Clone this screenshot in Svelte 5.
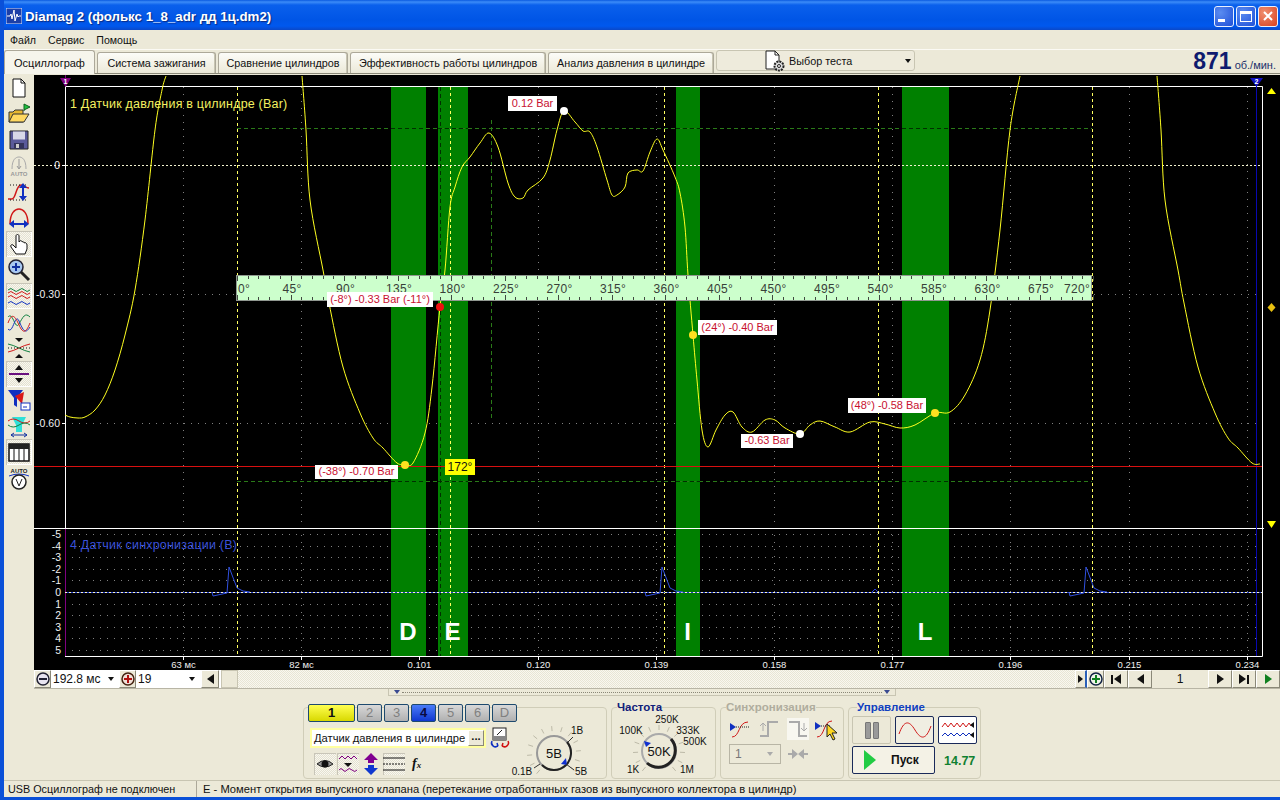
<script>
  // Trace of channel 1, in page pixels, read off the scope
  const leftEdge = [[65,415],[70,417],[78,418],[85,417],[95,410],[105,395],[115,370],[125,335],[135,290],[145,220],[155,130],[162,90],[166,76]];
  const dip = [[302,76],[306,130],[310,200],[323,270],[329,303],[343,367],[360,413],[373,438],[383,448],[397,463],[405,464],[413,463],[425,433],[432,387],[440,307],[445,270]];
  const body = [[450,207],[455,187],[462,167],[470,157],[480,143],[489,133],[498,147],[508,183],[515,197],[523,198],[528,190],[543,178],[550,160],[557,130],[564,111],[575,122],[583,131],[590,132],[597,147],[607,180],[612,195],[617,195],[625,187],[628,173],[637,170],[643,171],[650,152],[657,139],[663,150],[675,177],[680,193],[685,227],[688,275],[693,335],[697,380],[702,430],[708,447],[716,430],[725,415],[733,412],[742,427],[752,432],[765,420],[775,420],[785,428],[800,434],[810,425],[820,421],[835,427],[850,432],[870,422],[885,424],[900,428],[915,425],[935,413],[950,412],[965,395],[980,360],[990,310],[1000,230],[1010,130],[1020,76]];
  const rightDip = dip.filter((p) => p[0] + 855 < 1262).map((p) => [p[0] + 855, p[1]]);

  const toPoints = (list) => list.map((p) => p.join(",")).join(" ");

  // catmull-rom through the read-off points, the trace has no hard corners
  function smooth(list) {
    let d = `M${list[0][0]} ${list[0][1]}`;
    for (let i = 0; i < list.length - 1; i++) {
      const p0 = list[i - 1] || list[i];
      const p1 = list[i];
      const p2 = list[i + 1];
      const p3 = list[i + 2] || p2;
      const c1x = p1[0] + (p2[0] - p0[0]) / 6;
      const c1y = p1[1] + (p2[1] - p0[1]) / 6;
      const c2x = p2[0] - (p3[0] - p1[0]) / 6;
      const c2y = p2[1] - (p3[1] - p1[1]) / 6;
      d += `C${c1x.toFixed(1)} ${c1y.toFixed(1)} ${c2x.toFixed(1)} ${c2y.toFixed(1)} ${p2[0]} ${p2[1]}`;
    }
    return d;
  }
  const traces = [smooth(leftEdge), smooth([...dip, ...body]), smooth(rightDip)];

  const bands = [
    { x: 391, w: 35, letter: "D" },
    { x: 438, w: 30, letter: "E" },
    { x: 676, w: 24, letter: "I" },
    { x: 902, w: 47, letter: "L" }
  ];
  const cursors = [237.5, 450.5, 664.5, 878.5, 1092.5];
  const timeLabels = ["63 мс", "82 мс", "0.101", "0.120", "0.139", "0.158", "0.177", "0.196", "0.215", "0.234"];
  const timeX = timeLabels.map((_, i) => Math.round(183 + i * 118.2) + 0.5);

  const degrees = Array.from({ length: 17 }, (_, i) => i * 45);
  const step = 53.5;
  const minorTicks = Array.from({ length: 81 }, (_, i) => i);

  const yLabels = [
    { text: "0", y: 165 },
    { text: "-0.30", y: 294 },
    { text: "-0.60", y: 423 }
  ];
  const syncLabels = ["-5", "-4", "-3", "-2", "-1", "0", "1", "2", "3", "4", "5"];
  const syncY = syncLabels.map((_, i) => Math.round(534 + i * 11.6) + 0.5);

  const pulse = [[0,592],[1,596],[15,593],[17,567],[25,588],[31,591],[38,592]];
  const pulseAt = [212, 645, 1069];

  const notes = [
    { text: "0.12 Bar", x: 508, y: 96, w: 49, h: 15 },
    { text: "(24°) -0.40 Bar", x: 698, y: 320, w: 79, h: 15 },
    { text: "(48°) -0.58 Bar", x: 848, y: 398, w: 78, h: 15 },
    { text: "-0.63 Bar", x: 741, y: 434, w: 52, h: 14 },
    { text: "(-38°) -0.70 Bar", x: 315, y: 465, w: 83, h: 14 },
    { text: "(-8°) -0.33 Bar (-11°)", x: 327, y: 292, w: 106, h: 15 }
  ];
  const dots = [
    { x: 564, y: 111, c: "#ffffff" },
    { x: 693, y: 335, c: "#ffe020" },
    { x: 800, y: 434, c: "#ffffff" },
    { x: 935, y: 413, c: "#ffe020" },
    { x: 405, y: 465, c: "#ffe020" },
    { x: 440, y: 307, c: "#f01010" }
  ];

  const tabs = [
    { label: "Система зажигания", w: 119 },
    { label: "Сравнение цилиндров", w: 130 },
    { label: "Эффективность работы цилиндров", w: 196 },
    { label: "Анализ давления в цилиндре", w: 166 }
  ];
  const channels = [
    { label: "1", cls: "on-yellow" }, { label: "2", cls: "" }, { label: "3", cls: "" },
    { label: "4", cls: "on-blue" }, { label: "5", cls: "" }, { label: "6", cls: "" }, { label: "D", cls: "" }
  ];

  // radial tick marks for the two rotary switches
  function knobTicks(cx, cy, r1, r2, from, to, count) {
    return Array.from({ length: count }, (_, i) => {
      const a = ((from + ((to - from) * i) / (count - 1)) * Math.PI) / 180;
      return { x1: cx + r1 * Math.cos(a), y1: cy + r1 * Math.sin(a), x2: cx + r2 * Math.cos(a), y2: cy + r2 * Math.sin(a) };
    });
  }
  const voltTicks = knobTicks(555, 752, 22, 27, 130, 400, 13);
  const freqTicks = knobTicks(658, 751, 21, 26, 130, 410, 13);
</script>

<div class="window">
  <header class="titlebar">
    <svg class="app-icon" width="16" height="16" viewBox="0 0 16 16">
      <rect width="16" height="16" fill="#1c3fa8" stroke="#d8e4ff" />
      <path d="M1 8h3l1-2 1 5 2-9 1 11 2-7 1 3 1-1h2" fill="none" stroke="#fff" />
    </svg>
    <span class="title">Diamag 2 (фолькс 1_8_adr дд 1ц.dm2)</span>
    <span class="capbtn"><i class="min"></i></span>
    <span class="capbtn"><i class="max"></i></span>
    <span class="capbtn close">
      <svg width="12" height="12" viewBox="0 0 12 12"><path d="M2 2l8 8M10 2l-8 8" stroke="#fff" stroke-width="2" /></svg>
    </span>
  </header>

  <nav class="menu">
    <span>Файл</span>
    <span>Сервис</span>
    <span>Помощь</span>
  </nav>

  <div class="tabs">
    <span class="tab active">Осциллограф</span>
    {#each tabs as tab}
      <span class="tab" style="width: {tab.w}px">{tab.label}</span>
    {/each}
    <span class="test-select">
      <svg width="24" height="22" viewBox="0 0 24 22">
        <path d="M2 1h9l4 4v14H2z" fill="#fff" stroke="#222" />
        <path d="M11 1v4h4" fill="none" stroke="#222" />
        <circle cx="15" cy="16" r="4.500" fill="#ddd" stroke="#222" stroke-dasharray="2 1" stroke-width="2" />
        <circle cx="15" cy="16" r="1.500" fill="#fff" stroke="#222" />
      </svg>
      <span class="test-label">Выбор теста</span>
      <i class="caret"></i>
    </span>
    <span class="rpm"><b>871</b> об./мин.</span>
  </div>

  <div class="workspace">
    <aside class="toolbar">
      <span class="tool"><svg viewBox="0 0 24 24"><path d="M6 3h8l4 4v14H6z" fill="#fff" stroke="#111" /><path d="M14 3v4h4" fill="none" stroke="#111" /></svg></span>
      <span class="tool"><svg viewBox="0 0 24 24"><path d="M2 10h4l2-2h8v12H2z" fill="#e8b830" stroke="#333" /><path d="M2 20l4-8h16l-5 8z" fill="#ffd860" stroke="#333" /><path d="M17 9V2l6 3-6 3" fill="#20c040" stroke="#106020" /></svg></span>
      <span class="tool"><svg viewBox="0 0 24 24"><path d="M3 3h18v18H3z" fill="#5a5a9a" stroke="#222" /><rect x="6" y="3.500" width="12" height="8" fill="#d8d8e8" /><rect x="7" y="15" width="10" height="6" fill="#33335a" /><rect x="9" y="16" width="3" height="4" fill="#ccc" /></svg></span>
      <span class="tool"><svg viewBox="0 0 24 24"><path d="M5 15C5 5 9 3 12 3s7 2 7 12" fill="none" stroke="#aaa" /><path d="M12 5v9M10 12l2 3 2-3" fill="none" stroke="#999" /><text x="12" y="22" class="tool-text grey">AUTO</text></svg></span>
      <span class="tool"><svg viewBox="0 0 24 24"><path d="M1 19h4c4 0 4-14 9-14 4 0 4 3 8 3" fill="none" stroke="#d01818" stroke-width="1.500" /><path d="M3 5h18M3 20h18" stroke="#111" stroke-dasharray="1 2" /><path d="M16 5v14" stroke="#1030c0" stroke-width="2" /><path d="M12 8l4-5 4 5zM12 16l4 5 4-5z" fill="#1030c0" /></svg></span>
      <span class="tool"><svg viewBox="0 0 24 24"><path d="M3 18C3 7 8 3 12 3s9 4 9 15" fill="none" stroke="#d01818" stroke-width="1.500" /><path d="M5 18h14" stroke="#1030c0" stroke-width="2" /><path d="M7 14l-5 4 5 4zM17 14l5 4-5 4z" fill="#1030c0" /></svg></span>
      <span class="tool pressed"><svg viewBox="0 0 24 24"><path d="M9 22l-5-7c-1-2 1-3 2-2l3 3V4c0-2 3-2 3 0v6l1-1c1-1 2 0 2 1 1-1 2 0 2 1 1-1 3 0 3 2v4l-2 5z" fill="#fff" stroke="#111" /></svg></span>
      <span class="tool"><svg viewBox="0 0 24 24"><circle cx="9" cy="9" r="7" fill="#a8c8f0" stroke="#223" stroke-width="1.500" /><path d="M5 9h8M9 5v8" stroke="#1030a0" stroke-width="2" /><path d="M14 14l8 8" stroke="#222" stroke-width="3" /></svg></span>
      <span class="tool pressed"><svg viewBox="0 0 24 24"><path d="M1 6q3-3 5.500 0t5.500 0 5.500 0 5.500 0" fill="none" stroke="#108040" /><path d="M1 13q3-3 5.500 0t5.500 0 5.500 0 5.500 0M1 9q3-3 5.500 0t5.500 0 5.500 0 5.500 0" fill="none" stroke="#d01818" /><path d="M1 19q3-3 5.500 0t5.500 0 5.500 0 5.500 0" fill="none" stroke="#1030c0" /></svg></span>
      <span class="tool"><svg viewBox="0 0 24 24"><path d="M1 7c5-6 7 14 11 7s6-12 11-7" fill="none" stroke="#108040" /><path d="M1 19C6 25 8 2 12 11s6 14 11 6" fill="none" stroke="#1030c0" /><path d="M1 13C5 2 8 6 12 15s7 8 11-2" fill="none" stroke="#d01818" /></svg></span>
      <span class="tool"><svg viewBox="0 0 24 24"><path d="M8 2h8l-4 4zM8 22h8l-4-4z" fill="#111" /><path d="M1 16q5-1 11-4t11-4" fill="none" stroke="#d01818" /><path d="M1 8q5 1 11 4t11 4" fill="none" stroke="#108040" /><path d="M1 12h22" stroke="#111" stroke-dasharray="1 2" /></svg></span>
      <span class="tool pressed"><svg viewBox="0 0 24 24"><path d="M8 8h8l-4-5zM8 16h8l-4 5z" fill="#111" /><path d="M2 12h20" stroke="#6a1080" stroke-width="2" /></svg></span>
      <span class="tool"><svg viewBox="0 0 24 24"><path d="M1 2h15l-6 8v9l-3-2v-7z" fill="#1030c0" /><path d="M8 8l9-4-2 12z" fill="#d81818" /><rect x="14" y="15" width="9" height="7" fill="#fff" stroke="#1030c0" /><path d="M16 19h4" stroke="#1030c0" /></svg></span>
      <span class="tool"><svg viewBox="0 0 24 24"><path d="M5 3h14l-4 8v7h-6v-7z" fill="#30e0d8" /><path d="M1 7q5-4 11 0t11 0" fill="none" stroke="#d01818" /><path d="M1 11q5 4 11 0t11 0" fill="none" stroke="#108040" /><path d="M4 21h16M4 21l3-2M4 21l3 2M20 21l-3-2M20 21l-3 2" stroke="#1030a0" fill="none" /></svg></span>
      <span class="tool pressed"><svg viewBox="0 0 24 24"><rect x="2" y="4" width="20" height="17" fill="#fff" stroke="#111" stroke-width="1.500" /><rect x="2" y="4" width="20" height="5" fill="#222" /><path d="M7 9v12M12 9v12M17 9v12" stroke="#111" /></svg></span>
      <span class="tool"><svg viewBox="0 0 24 24"><text x="12" y="7" class="tool-text">AUTO</text><path d="M2 10q10-4 20 0" fill="none" stroke="#1030c0" /><circle cx="12" cy="16" r="7" fill="#fff" stroke="#222" stroke-width="1.500" /><path d="M9 13l3 7 3-7" fill="none" stroke="#222" /></svg></span>
    </aside>

    <svg class="scope" viewBox="34 75 1246 595" width="1246" height="595">
      <!-- grid -->
      {#each timeX as x}
        <line x1={x} y1="87" x2={x} y2="656" class="grid-dot" />
      {/each}
      <line x1="65" y1="294.500" x2="1262" y2="294.500" class="grid-dot" />
      <line x1="65" y1="423.500" x2="1262" y2="423.500" class="grid-dot" />
      {#each syncY as y}
        <line x1="65" y1={y} x2="1262" y2={y} class="grid-dot" />
      {/each}

      {#each bands as band}
        <rect x={band.x} y="87" width={band.w} height="569" fill="#008000" />
      {/each}

      <line x1="237" y1="128.500" x2="1092" y2="128.500" class="grid-green" />
      <line x1="237" y1="481.500" x2="1092" y2="481.500" class="grid-green" />
      <line x1="491.500" y1="120" x2="491.500" y2="420" class="grid-green" />
      {#each bands as band}
        <line x1={band.x} y1="128.500" x2={band.x + band.w} y2="128.500" class="grid-dark" />
        <line x1={band.x} y1="481.500" x2={band.x + band.w} y2="481.500" class="grid-dark" />
      {/each}
      <line x1="440.500" y1="87" x2="440.500" y2="656" class="grid-dark" />

      {#each cursors as x}
        <line x1={x} y1="87" x2={x} y2="656" class="cursor-line" />
      {/each}

      <!-- frame -->
      <line x1="65.500" y1="75" x2="65.500" y2="87" stroke="#800080" />
      <line x1="65.500" y1="87" x2="65.500" y2="528" stroke="#fff" />
      <line x1="65.500" y1="528" x2="65.500" y2="656" stroke="#800080" />
      <path d="M65 86.500H1262.500V656.500H65" fill="none" stroke="#fff" />
      <line x1="34" y1="528.500" x2="1264" y2="528.500" stroke="#fff" />
      <line x1="1256.500" y1="78" x2="1256.500" y2="656" stroke="#0808b0" />
      <line x1="34" y1="165.500" x2="1262" y2="165.500" class="zero-line" />
      <line x1="65" y1="592.500" x2="1262" y2="592.500" stroke="#2840d0" />
      <line x1="65" y1="592.500" x2="1262" y2="592.500" class="zero-line" />

      <!-- traces -->
      {#each traces as d}
        <path {d} class="trace" />
      {/each}
      {#each pulseAt as x0}
        <polyline points={toPoints(pulse.map((p) => [p[0] + x0, p[1]]))} class="trace-blue" />
      {/each}
      <path d="M872 592l3-3 3 3" fill="none" stroke="#2840d0" />

      <!-- angle ruler -->
      <rect x="236.500" y="275.500" width="855" height="25" class="ruler" />
      {#each minorTicks as i}
        <line x1={Math.round(237 + (i * step) / 5) + 0.5} y1="276" x2={Math.round(237 + (i * step) / 5) + 0.5} y2={i % 5 === 0 ? 281 : 279} class="tick" />
        <line x1={Math.round(237 + (i * step) / 5) + 0.5} y1="300" x2={Math.round(237 + (i * step) / 5) + 0.5} y2={i % 5 === 0 ? 295 : 297} class="tick" />
      {/each}
      {#each degrees as deg, i}
        <text x={i === 0 ? 244 : i === 16 ? 1077 : 238.5 + i * step} y="292.500" class="ruler-text">{deg}°</text>
      {/each}

      <line x1="34" y1="466.500" x2="1262" y2="466.500" stroke="#d81010" />

      <!-- axis labels -->
      {#each yLabels as label}
        <text x="60" y={label.y + 4} class="axis axis-end">{label.text}</text>
        <line x1="62" y1={label.y + 0.5} x2="65" y2={label.y + 0.5} stroke="#fff" />
      {/each}
      {#each syncLabels as label, i}
        <text x="61" y={syncY[i] + 3.500} class="axis axis-end">{label}</text>
      {/each}
      {#each timeLabels as label, i}
        <line x1={timeX[i]} y1="656" x2={timeX[i]} y2="660" stroke="#fff" />
        <text x={timeX[i]} y="668" class="axis axis-small">{label}</text>
      {/each}

      <text x="70" y="108" class="channel-name yellow">1 Датчик давления в цилиндре (Bar)</text>
      <text x="70" y="549" class="channel-name blue">4 Датчик синхронизации (B)</text>

      {#each bands as band}
        <text x={band.x + band.w / 2 - 0.5} y="640" class="band-letter">{band.letter}</text>
      {/each}

      <!-- measurement labels -->
      {#each notes as note}
        <rect x={note.x} y={note.y} width={note.w} height={note.h} fill="#fff" />
        <text x={note.x + note.w / 2} y={note.y + note.h - 4} class="note">{note.text}</text>
      {/each}
      {#each dots as dot}
        <circle cx={dot.x} cy={dot.y} r="4" fill={dot.c} />
      {/each}
      <rect x="445" y="459" width="30" height="16" fill="#ffff00" />
      <text x="460" y="471" class="note black">172°</text>

      <!-- channel markers -->
      <path d="M60 78h11l-5.500 9z" fill="#800080" />
      <text x="65.500" y="83.500" class="marker-num">1</text>
      <path d="M1250 78h13l-6.500 9z" fill="#1010c0" />
      <text x="1256.500" y="83.500" class="marker-num">2</text>
      <path d="M1267 94l4.500-6 4.500 6z" fill="#ffff00" />
      <path d="M1271.500 303l4 4.500-4 4.500-4-4.500z" fill="#e8c010" />
      <path d="M1267 521h9l-4.500 7z" fill="#ffff00" />
    </svg>
  </div>

  <div class="scrollrow">
    <span class="bevel square"><svg width="14" height="14" viewBox="0 0 14 14"><circle cx="7" cy="7" r="6" fill="#e8e4f0" stroke="#223" stroke-width="1.500" /><path d="M3 7h8" stroke="#223" stroke-width="2" /></svg></span>
    <span class="combo time">192.8 мс<i class="caret"></i></span>
    <span class="bevel square"><svg width="14" height="14" viewBox="0 0 14 14"><circle cx="7" cy="7" r="6" fill="#f0e0d8" stroke="#421" stroke-width="1.500" /><path d="M3 7h8M7 3v8" stroke="#b01010" stroke-width="2" /></svg></span>
    <span class="combo count">19<i class="caret"></i></span>
    <span class="bevel arrow"><i class="tri left"></i></span>
    <span class="thumb"></span>
    <span class="track"></span>
    <span class="bevel narrow"><i class="tri right small"></i></span>
    <span class="bevel square"><svg width="14" height="14" viewBox="0 0 14 14"><circle cx="7" cy="7" r="6" fill="#f0f4e8" stroke="#124" stroke-width="1.500" /><path d="M3 7h8M7 3v8" stroke="#108020" stroke-width="2" /></svg></span>
    <span class="bevel nav"><i class="bar"></i><i class="tri left"></i></span>
    <span class="bevel nav"><i class="tri left"></i></span>
    <span class="page">1</span>
    <span class="bevel nav"><i class="tri right"></i></span>
    <span class="bevel nav"><i class="tri right"></i><i class="bar"></i></span>
    <span class="bevel nav"><i class="tri right green"></i></span>
  </div>

  <div class="splitter"><i class="tri-down"></i><span class="dots"></span><i class="tri-down"></i></div>

  <div class="groups">
    <section class="group channels-group">
      <div class="channel-col">
        <div class="channel-row">
          {#each channels as ch, i}
            <span class="channel {ch.cls}" class:wide={i === 0}>{ch.label}</span>
          {/each}
        </div>
        <div class="sensor-row">
          <span class="sensor">Датчик давления в цилиндре<span class="more">...</span></span>
          <svg width="22" height="22" viewBox="0 0 22 22">
            <rect x="4" y="1" width="13" height="12" fill="#fff" stroke="#222" />
            <rect x="4" y="9" width="13" height="4" fill="#888" />
            <path d="M8 8l5-5" stroke="#222" />
            <path d="M3 14a4 4 0 0 0 6 5M9 19l-3 1M9 19l-1-3" fill="none" stroke="#1030c0" stroke-width="1.500" />
            <path d="M19 14a4 4 0 0 1-6 5M13 19l3 1M13 19l1-3" fill="none" stroke="#d01010" stroke-width="1.500" />
          </svg>
        </div>
        <div class="icon-row">
          <span class="mini pressed-mini"><svg width="18" height="18" viewBox="0 0 18 18"><path d="M1 9q8-7 16 0-8 6-16 0z" fill="#999" stroke="#222" /><circle cx="9" cy="9" r="3.500" fill="#111" /></svg></span>
          <span class="mini pressed-mini"><svg width="20" height="20" viewBox="0 0 20 20"><path d="M1 5l3-3 3 3 3-3 3 3 3-3 3 3" fill="none" stroke="#800080" /><path d="M1 16q2-3 4 0t4 0 5 0 5 0" fill="none" stroke="#800080" /><path d="M6 9h8l-4 4z" fill="#111" /></svg></span>
          <span class="mini"><svg width="20" height="22" viewBox="0 0 20 22"><path d="M10 0l7 7h-4v3H7V7H3z" fill="#800090" /><path d="M10 22l7-7h-4v-3H7v3H3z" fill="#1038d0" /></svg></span>
          <span class="mini pressed-mini"><svg width="22" height="16" viewBox="0 0 22 16"><path d="M0 2h22M0 14h22" stroke="#111" /><path d="M0 8h22" stroke="#111" stroke-dasharray="2 1" /></svg></span>
          <span class="fx">f<small>x</small></span>
        </div>
      </div>
      <svg class="knob volt" viewBox="518 712 87 66" width="87" height="66">
        {#each voltTicks as t}
          <line x1={t.x1} y1={t.y1} x2={t.x2} y2={t.y2} class="knob-tick" />
        {/each}
        <circle cx="555" cy="752" r="17" fill="#ece9d8" stroke="#999" stroke-width="2" />
        <path d="M568 741A17 17 0 0 1 543 764" fill="none" stroke="#222" stroke-width="2" />
        <path d="M562 763l5-6 1 7z" fill="#1030d0" />
        <line x1="569" y1="741" x2="574" y2="736" stroke="#333" />
        <line x1="541" y1="763" x2="535" y2="767" stroke="#333" />
        <line x1="567" y1="763" x2="575" y2="769" stroke="#333" />
        <text x="555" y="757" class="knob-center">5В</text>
        <text x="578" y="733" class="knob-label">1В</text>
        <text x="523" y="774" class="knob-label">0.1В</text>
        <text x="582" y="774" class="knob-label">5В</text>
      </svg>
    </section>

    <section class="group freq-group">
      <h3 class="legend navy">Частота</h3>
      <svg class="knob" viewBox="611 712 103 66" width="103" height="66">
        {#each freqTicks as t}
          <line x1={t.x1} y1={t.y1} x2={t.x2} y2={t.y2} class="knob-tick" />
        {/each}
        <circle cx="658" cy="751" r="17" fill="#ece9d8" stroke="#aaa" stroke-width="2" />
        <path d="M670 739A17 17 0 0 1 646 763" fill="none" stroke="#222" stroke-width="3" />
        <path d="M643 741l7 2-5 4z" fill="#1030d0" />
        <text x="658" y="756" class="knob-center">50K</text>
        <text x="666" y="723" class="knob-label">250K</text>
        <text x="630" y="734" class="knob-label">100K</text>
        <text x="687" y="734" class="knob-label">333K</text>
        <text x="694" y="745" class="knob-label">500K</text>
        <text x="632" y="773" class="knob-label">1K</text>
        <text x="686" y="773" class="knob-label">1M</text>
      </svg>
    </section>

    <section class="group sync-group">
      <h3 class="legend grey">Синхронизация</h3>
      <div class="sync-icons">
        <svg width="22" height="22" viewBox="0 0 22 22"><path d="M3 19c8 0 6-15 16-15" fill="none" stroke="#d01818" /><path d="M1 5l6 4-6 4z" fill="#1030c0" /><path d="M7 9h14" stroke="#222" stroke-dasharray="1 1" /></svg>
        <svg width="22" height="22" viewBox="0 0 22 22"><path d="M2 18h8V4h10" fill="none" stroke="#aaa" stroke-width="2" /><path d="M5 13V5M2 8l3-3 3 3" fill="none" stroke="#aaa" /></svg>
        <span class="sync-on"><svg width="22" height="22" viewBox="0 0 22 22"><path d="M2 4h10v14h8" fill="none" stroke="#aaa" stroke-width="2" /><path d="M17 5v8M14 10l3 3 3-3" fill="none" stroke="#aaa" /></svg></span>
        <svg class="cursor-icon" width="28" height="26" viewBox="0 0 28 26"><path d="M3 21c8 0 6-16 15-16" fill="none" stroke="#d01818" /><path d="M1 6l6 4-6 4z" fill="#1030c0" /><path d="M7 10h10" stroke="#222" stroke-dasharray="1 1" /><path d="M13 8l0 13 3-3 3 6 2-1-3-6h5z" fill="#ffd820" stroke="#222" /></svg>
      </div>
      <div class="sync-row">
        <span class="sync-combo">1<i class="caret pale"></i></span>
        <svg width="22" height="12" viewBox="0 0 22 12"><path d="M1 6h7M14 6h7" stroke="#aaa" stroke-width="2" /><path d="M5 1l6 5-6 5zM17 1l-6 5 6 5z" fill="#aaa" /></svg>
      </div>
    </section>

    <section class="group control-group">
      <h3 class="legend blue-title">Управление</h3>
      <div class="control-row">
        <span class="ctrl pause"><i></i><i></i></span>
        <span class="ctrl framed"><svg width="34" height="24" viewBox="0 0 34 24"><path d="M1 16C6 2 11 2 17 12s11 10 16 -4" fill="none" stroke="#d01818" /></svg></span>
        <span class="ctrl framed light"><svg width="34" height="24" viewBox="0 0 34 24"><path d="M1 9l3-4 3 4 3-4 3 4 3-4 3 4 3-4 3 4 3-4 2 3" fill="none" stroke="#d01818" /><path d="M1 18l3-3 3 3 3-3 3 3 3-3 3 3 3-3 3 3 3-3 2 2" fill="none" stroke="#1030c0" /><path d="M33 4l-4 3 4 3zM33 14l-4 3 4 3z" fill="#111" /></svg></span>
      </div>
      <div class="control-row">
        <span class="start">
          <svg width="14" height="20" viewBox="0 0 14 20"><path d="M1 0l12 10L1 20z" fill="#22cc44" /></svg>
          <b>Пуск</b>
        </span>
        <span class="timer">14.77</span>
      </div>
    </section>
  </div>

  <footer class="status">
    <span class="status-usb">USB Осциллограф не подключен</span>
    <span class="status-msg">E - Момент открытия выпускного клапана (перетекание отработанных газов из выпускного коллектора в цилиндр)</span>
  </footer>
</div>

<style>
  :global(body) {
    margin: 0;
    overflow: hidden;
    background: #ece9d8;
  }

  .window {
    width: 1280px;
    height: 800px;
    box-sizing: border-box;
    display: flex;
    flex-direction: column;
    background: #ece9d8;
    border-left: 4px solid #0a50d8;
    border-bottom: 3px solid #0a50d8;
    font: 11px "Liberation Sans", Arial, sans-serif;
    color: #111;
    overflow: hidden;
  }

  .titlebar {
    height: 30px;
    flex: none;
    display: flex;
    align-items: center;
    margin-left: -4px;
    padding: 2px 2px 0 6px;
    box-sizing: border-box;
    background: linear-gradient(#0a5ae0 0, #3c8cf8 2px, #0a60ec 5px, #0055e6 20px, #0058ee 26px, #0a48c8 30px);
  }

  .app-icon {
    margin-right: 3px;
  }

  .title {
    flex: 1;
    color: #fff;
    font-size: 13.300px;
    font-weight: bold;
    text-shadow: 1px 1px 1px #0a2a80;
  }

  .capbtn {
    width: 20px;
    height: 21px;
    margin-left: 2px;
    display: flex;
    align-items: center;
    justify-content: center;
    box-sizing: border-box;
    border: 1px solid #e8f0ff;
    border-radius: 3px;
    background: radial-gradient(circle at 30% 30%, #5a8cf0, #2050d8);
  }

  .capbtn.close {
    background: radial-gradient(circle at 30% 30%, #f09070, #d84020);
  }

  .capbtn .min {
    width: 7px;
    height: 3px;
    background: #fff;
    margin: 9px 6px 0 0;
  }

  .capbtn .max {
    width: 12px;
    height: 11px;
    box-sizing: border-box;
    border: 1px solid #fff;
    border-top-width: 3px;
  }

  .menu {
    height: 20px;
    flex: none;
    display: flex;
    align-items: center;
    padding-left: 6px;
    gap: 12px;
    border-bottom: 1px solid #fbfaf4;
    box-sizing: border-box;
    font-size: 10.600px;
  }

  .tabs {
    height: 24px;
    flex: none;
    display: flex;
    align-items: flex-end;
    gap: 2px;
    box-sizing: border-box;
    border-bottom: 1px solid #8a8878;
    font-size: 10.800px;
  }

  .tab {
    height: 21px;
    box-sizing: border-box;
    display: flex;
    align-items: center;
    justify-content: center;
    border: 1px solid #aca899;
    border-bottom: none;
    border-radius: 3px 3px 0 0;
    background: linear-gradient(#fcfcf8, #ece9d8);
    box-shadow: inset -1px 0 #c8c5b2;
    white-space: nowrap;
  }

  .tab.active {
    width: 91px;
    height: 24px;
    font-size: 11px;
    background: #f6f5ec;
    margin-bottom: -1px;
    box-shadow: none;
  }

  .test-select {
    width: 199px;
    height: 21px;
    margin-bottom: 2px;
    display: flex;
    align-items: center;
    box-sizing: border-box;
    padding-left: 47px;
    border: 1px solid #c8c5b2;
    border-radius: 3px;
    background: #eeebdc;
  }

  .test-label {
    margin-left: 1px;
    flex: 1;
  }

  .test-select .caret {
    margin-right: 3px;
  }

  .caret {
    width: 0;
    height: 0;
    border: 3px solid transparent;
    border-top: 4px solid #111;
    border-bottom: none;
    display: inline-block;
  }

  .caret.pale {
    border-top-color: #aaa;
  }

  .rpm {
    margin-left: auto;
    padding-right: 4px;
    color: #22306a;
    display: flex;
    align-items: baseline;
    gap: 3px;
    font-size: 11px;
  }

  .rpm b {
    font-size: 23px;
    line-height: 24px;
    color: #0e1a6e;
  }

  .workspace {
    flex: none;
    display: flex;
    height: 596px;
  }

  .toolbar {
    width: 30px;
    flex: none;
    display: flex;
    flex-direction: column;
    padding-top: 1px;
    box-sizing: border-box;
  }

  .tool {
    height: 26px;
    flex: none;
    display: flex;
    align-items: center;
    justify-content: center;
  }

  .tool svg {
    width: 24px;
    height: 24px;
  }

  .tool.pressed {
    background: repeating-conic-gradient(#f8f7f0 0 25%, #e4e1d0 0 50%) 0 0 / 2px 2px;
    box-shadow: inset 1px 1px #c8c5b8, inset -1px -1px #fff;
    margin: 0 2px;
  }

  .tool-text {
    font: bold 6px "Liberation Sans", Arial, sans-serif;
    text-anchor: middle;
    fill: #222;
  }

  .tool-text.grey {
    fill: #999;
  }

  .scope {
    display: block;
    background: #000;
    flex: none;
    margin-top: 1px;
  }

  .grid-dot {
    stroke: #808080;
    stroke-dasharray: 1 6;
  }

  .grid-green {
    stroke: #2a7a18;
    stroke-dasharray: 4 3;
  }

  .grid-dark {
    stroke: #003000;
    stroke-dasharray: 4 3;
  }

  .cursor-line {
    stroke: #ffff60;
    stroke-dasharray: 3 3;
  }

  .zero-line {
    stroke: #f4f4d0;
    stroke-dasharray: 2 2;
  }

  .trace {
    fill: none;
    stroke: #ffff20;
  }

  .trace-blue {
    fill: none;
    stroke: #3050e0;
  }

  .ruler {
    fill: #ccffcc;
    stroke: #909890;
  }

  .tick {
    stroke: #404840;
  }

  .ruler-text {
    font-size: 12px;
    letter-spacing: 0.3px;
    fill: #384038;
    text-anchor: middle;
  }

  .axis {
    fill: #f0f0f0;
    font-size: 10.500px;
  }

  .axis-end {
    text-anchor: end;
  }

  .axis-small {
    text-anchor: middle;
    font-size: 9.500px;
  }

  .channel-name {
    font-size: 12.500px;
    letter-spacing: 0.2px;
  }

  .channel-name.yellow {
    fill: #f4f060;
  }

  .channel-name.blue {
    fill: #3a50d8;
  }

  .band-letter {
    fill: #fff;
    font-size: 24px;
    font-weight: bold;
    text-anchor: middle;
  }

  .note {
    fill: #c81030;
    font-size: 11px;
    text-anchor: middle;
  }

  .note.black {
    fill: #111;
    font-size: 12px;
  }

  .marker-num {
    fill: #fff;
    font-size: 7px;
    font-weight: bold;
    text-anchor: middle;
  }

  .scrollrow {
    height: 19px;
    flex: none;
    margin-left: 30px;
    display: flex;
    align-items: stretch;
    box-sizing: border-box;
    background: #fff;
    border-bottom: 1px solid #b8b5a5;
    font-size: 12px;
  }

  .bevel {
    display: flex;
    align-items: center;
    justify-content: center;
    box-sizing: border-box;
    background: #ece9d8;
    border: 1px solid;
    border-color: #fff #8a8878 #8a8878 #fff;
    flex: none;
  }

  .square {
    width: 17px;
  }

  .arrow {
    width: 18px;
    margin-left: 1px;
  }

  .narrow {
    width: 12px;
    border-right: 2px solid #2a60b8;
  }

  .nav {
    width: 24px;
    gap: 1px;
  }

  .combo {
    background: #fff;
    display: flex;
    align-items: center;
    justify-content: space-between;
    padding: 0 5px 0 2px;
    box-sizing: border-box;
    flex: none;
  }

  .combo.time {
    width: 68px;
  }

  .combo.count {
    width: 64px;
  }

  .thumb {
    width: 17px;
    margin-left: 2px;
    background: #ece9d8;
    border: 1px solid #c8c5b2;
    box-sizing: border-box;
    flex: none;
  }

  .track {
    flex: 1;
    background: repeating-conic-gradient(#f8f7f0 0 25%, #e8e5d4 0 50%) 0 0 / 2px 2px;
  }

  .page {
    width: 56px;
    flex: none;
    background: #ece9d8;
    text-align: center;
    line-height: 18px;
  }

  .tri {
    width: 0;
    height: 0;
    border: 5px solid transparent;
  }

  .tri.left {
    border-left: none;
    border-right: 7px solid #111;
  }

  .tri.right {
    border-right: none;
    border-left: 7px solid #111;
  }

  .tri.right.small {
    border-width: 4px 0 4px 5px;
  }

  .tri.right.green {
    border-left-color: #108020;
  }

  .bar {
    width: 2px;
    height: 9px;
    background: #111;
  }

  .splitter {
    height: 7px;
    flex: none;
    width: 508px;
    margin-left: 384px;
    box-sizing: border-box;
    display: flex;
    align-items: center;
    gap: 2px;
    padding: 0 5px;
    border: 1px solid #c8c5b2;
    border-top: none;
  }

  .dots {
    flex: 1;
    border-top: 1px dotted #8a8878;
  }

  .tri-down {
    width: 0;
    height: 0;
    border: 3px solid transparent;
    border-top: 4px solid #3a4a90;
    border-bottom: none;
  }

  .groups {
    flex: none;
    height: 71px;
    margin-top: 11px;
    padding-left: 299px;
    display: flex;
    gap: 4px;
  }

  .group {
    height: 72px;
    box-sizing: border-box;
    border: 1px solid #d0cdb8;
    border-radius: 4px;
    flex: none;
  }

  .legend {
    margin: -8px 0 0 5px;
    padding: 0;
    font-size: 11.500px;
    font-weight: bold;
    line-height: 14px;
    background: #ece9d8;
    width: fit-content;
  }

  .navy {
    color: #10207a;
  }

  .grey {
    color: #b0ad9e;
  }

  .blue-title {
    color: #1040c0;
  }

  .channels-group {
    width: 304px;
    display: flex;
  }

  .channel-col {
    width: 213px;
    flex: none;
    padding-left: 4px;
    margin-top: -4px;
    box-sizing: border-box;
  }

  .channel-row {
    display: flex;
    gap: 2px;
    height: 18px;
  }

  .channel {
    width: 25px;
    box-sizing: border-box;
    border: 1px solid #1e4a6e;
    border-radius: 2px;
    background: linear-gradient(#d8d8d8, #b0b0b0);
    color: #808080;
    font-size: 13px;
    text-align: center;
    line-height: 16px;
    flex: none;
  }

  .channel.wide {
    width: 47px;
  }

  .on-yellow {
    background: linear-gradient(#ffff50, #d8d800);
    color: #111;
    font-weight: bold;
  }

  .on-blue {
    background: linear-gradient(#4a7cf8, #1038d0);
    color: #0a0a40;
    font-weight: bold;
  }

  .sensor-row {
    display: flex;
    align-items: center;
    gap: 3px;
    margin-top: 6px;
    padding-left: 2px;
    height: 20px;
  }

  .sensor {
    width: 176px;
    height: 20px;
    box-sizing: border-box;
    display: flex;
    align-items: center;
    justify-content: space-between;
    border: 2px solid #ffffa0;
    background: #fff;
    padding-left: 2px;
    font-size: 11.200px;
    white-space: nowrap;
  }

  .more {
    width: 16px;
    height: 16px;
    flex: none;
    background: #ece9d8;
    border: 1px solid;
    border-color: #fff #8a8878 #8a8878 #fff;
    box-sizing: border-box;
    text-align: center;
    line-height: 10px;
    font-weight: bold;
  }

  .icon-row {
    display: flex;
    align-items: center;
    gap: 1px;
    margin-top: 5px;
    height: 22px;
    padding-left: 6px;
  }

  .mini {
    width: 22px;
    height: 22px;
    display: flex;
    align-items: center;
    justify-content: center;
    flex: none;
  }

  .pressed-mini {
    background: repeating-conic-gradient(#f8f7f0 0 25%, #e4e1d0 0 50%) 0 0 / 2px 2px;
    box-shadow: inset 1px 1px #c8c5b8;
  }

  .fx {
    margin-left: 6px;
    font: italic bold 14px "Liberation Serif", serif;
  }

  .fx small {
    font-size: 9px;
  }

  .knob {
    flex: none;
    overflow: visible;
    margin-top: 5px;
  }

  .knob-tick {
    stroke: #bdbaa8;
  }

  .knob-center {
    font-size: 13px;
    text-anchor: middle;
    fill: #111;
  }

  .knob-label {
    font-size: 10px;
    text-anchor: middle;
    fill: #111;
  }

  .freq-group {
    width: 105px;
  }

  .freq-group .knob {
    margin-top: -2px;
  }

  .sync-group {
    width: 124px;
  }

  .sync-icons {
    display: flex;
    align-items: center;
    gap: 7px;
    padding: 3px 0 0 8px;
    height: 24px;
  }

  .sync-on {
    display: flex;
    background: #f8f7f0;
  }

  .cursor-icon {
    margin-left: -2px;
  }

  .sync-row {
    display: flex;
    align-items: center;
    gap: 6px;
    padding: 3px 0 0 8px;
  }

  .sync-combo {
    width: 52px;
    height: 20px;
    box-sizing: border-box;
    display: flex;
    align-items: center;
    justify-content: space-between;
    padding: 0 7px 0 5px;
    border: 1px solid #b8b5a5;
    font-size: 12px;
    color: #777;
  }

  .control-group {
    width: 133px;
    padding-left: 3px;
  }

  .control-row {
    display: flex;
    gap: 4px;
    margin-top: 2px;
  }

  .ctrl {
    width: 39px;
    height: 28px;
    box-sizing: border-box;
    display: flex;
    align-items: center;
    justify-content: center;
    border: 1px solid #c8c5b2;
    border-radius: 2px;
    flex: none;
  }

  .pause {
    gap: 2px;
  }

  .pause i {
    width: 4px;
    height: 15px;
    background: #9a9a9a;
    border: 1px solid #777;
    border-radius: 1px;
  }

  .framed {
    border: 1px solid #1a2a5a;
    background: #f0eee2;
  }

  .framed.light {
    background: #fff;
  }

  .start {
    width: 83px;
    height: 28px;
    box-sizing: border-box;
    display: flex;
    align-items: center;
    padding-left: 10px;
    gap: 14px;
    border: 1px solid #1a2a5a;
    border-radius: 2px;
    background: #f4f2e6;
    flex: none;
  }

  .start b {
    font-size: 12px;
  }

  .timer {
    margin: 4px 0 0 5px;
    color: #108030;
    font-size: 12.500px;
    font-weight: bold;
    line-height: 22px;
  }

  .status {
    flex: none;
    height: 17px;
    margin-top: auto;
    display: flex;
    align-items: center;
    border-top: 1px solid #c8c5b2;
    box-sizing: border-box;
    padding-left: 4px;
  }

  .status-usb {
    width: 188px;
    flex: none;
    font-size: 10.800px;
    line-height: 16px;
    box-shadow: 1px 0 #aca899;
  }

  .status-msg {
    padding-left: 7px;
    font-size: 11.200px;
    white-space: nowrap;
  }
</style>
